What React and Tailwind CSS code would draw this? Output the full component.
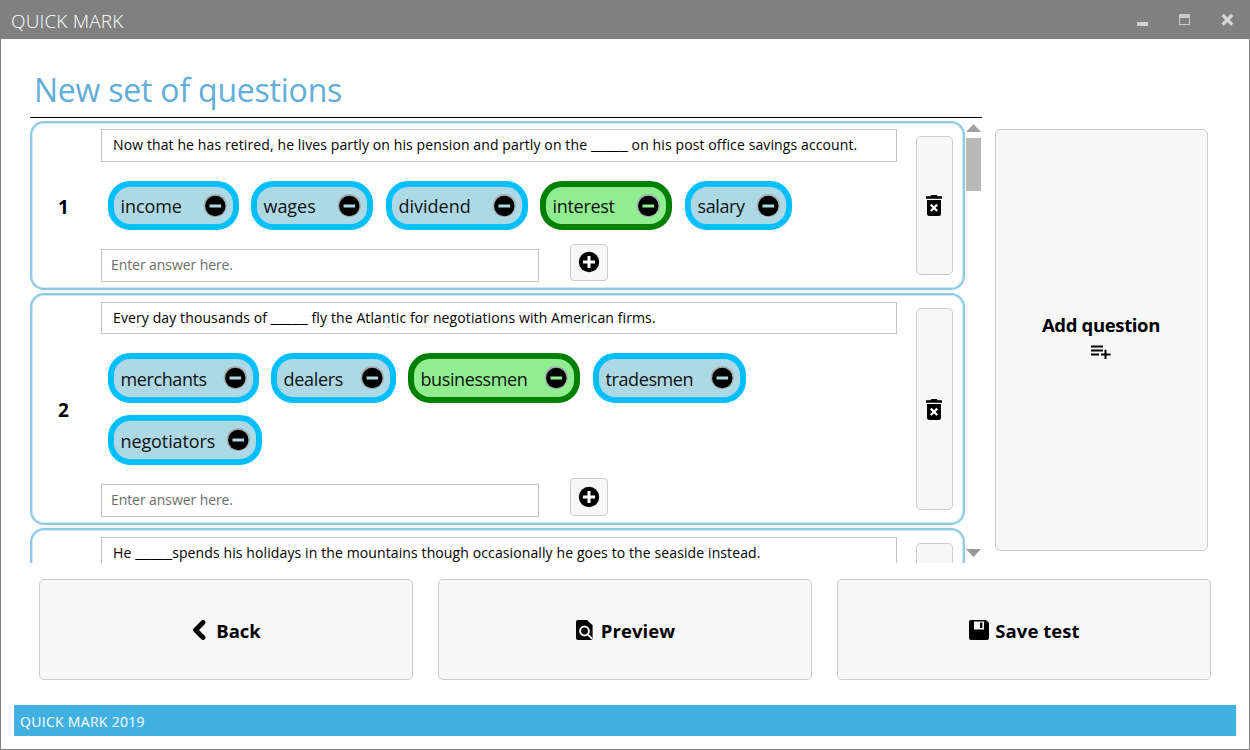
import React from "react";

const questions = [
  {
    number: 1,
    before: "Now that he has retired, he lives partly on his pension and partly on the ",
    after: " on his post office savings account.",
    height: "h-[169px]",
    top: "pt-[6px]",
    box: "h-[33px] pb-[2px]",
    chipArea: "mt-[19px] h-[49px]",
    chipHeight: "h-[49px]",
    entry: "mt-[14px]",
    input: "mt-[5px]",
    addButton: "h-[37px] pb-px",
    trash: "h-[139px]",
    answers: [
      { text: "income", width: "w-[131px]", track: "tracking-[-0.1px]", gap: "mr-[12px]" },
      { text: "wages", width: "w-[122px]", track: "tracking-[-0.05px]", gap: "mr-[13px]" },
      { text: "dividend", width: "w-[142px]", track: "", gap: "mr-[12px]" },
      { text: "interest", width: "w-[132px]", track: "tracking-[-0.3px]", gap: "mr-[13px]", correct: true },
      { text: "salary", width: "w-[107px]", track: "tracking-[-0.4px]", gap: "" },
    ],
  },
  {
    number: 2,
    before: "Every day thousands of ",
    after: " fly the Atlantic for negotiations with American firms.",
    height: "h-[232px]",
    top: "pt-[7px]",
    box: "h-[32px]",
    chipArea: "mt-[19px] h-[112px]",
    chipHeight: "h-[50px]",
    entry: "mt-[13px]",
    input: "mt-[6px]",
    addButton: "h-[38px]",
    trash: "h-[202px]",
    answers: [
      { text: "merchants", width: "w-[151px]", track: "tracking-[-0.4px]", gap: "mr-[12px]" },
      { text: "dealers", width: "w-[125px]", track: "tracking-[-0.3px]", gap: "mr-[12px]" },
      { text: "businessmen", width: "w-[172px]", track: "tracking-[-0.4px]", gap: "mr-[13px]", correct: true },
      { text: "tradesmen", width: "w-[153px]", track: "tracking-[-0.4px]", gap: "" },
      { text: "negotiators", width: "w-[154px]", track: "tracking-[-0.1px]", gap: "" },
    ],
  },
  {
    number: 3,
    collapsed: true,
    before: "He ",
    after: "spends his holidays in the mountains though occasionally he goes to the seaside instead.",
    height: "h-[170px]",
    top: "pt-[7px]",
    box: "h-[33px] pb-[2px]",
    trash: "h-[139px]",
  },
];

function MinusIcon() {
  return (
    <svg className="h-[26px] w-[26px] shrink-0" viewBox="0 0 26 26">
      <circle cx="13.300" cy="12.500" r="11.600" fill="#a3aeb1" />
      <circle cx="13.300" cy="13" r="10.200" fill="#000" />
      <rect x="7.500" y="11.500" width="11.600" height="3" fill="currentColor" />
    </svg>
  );
}

function PlusIcon() {
  return (
    <svg className="h-[22px] w-[22px]" viewBox="0 0 22 22">
      <circle cx="11" cy="11" r="10.200" />
      <path d="M9.500 5h3v4.500H17v3h-4.500v4.500h-3v-4.500H5v-3h4.500z" fill="#fff" />
    </svg>
  );
}

function TrashIcon() {
  return (
    <svg className="h-[21px] w-[16px]" viewBox="0 0 16 21">
      <path d="M5.2 0h5.6l.8 1.2H16v2.6H0V1.2h4.4z" />
      <path d="M1 5h14v13.400a2.500 2.500 0 0 1-2.500 2.500h-9A2.500 2.500 0 0 1 1 18.400z" />
      <path d="M4.800 9.600l6.400 6.400M11.200 9.600l-6.400 6.400" stroke="#fff" strokeWidth="2.200" fill="none" />
    </svg>
  );
}

function Chip({ answer, height }) {
  const tone = answer.correct
    ? "border-[#008000] bg-[#90ee90] text-[#90ee90]"
    : "border-[#00bfff] bg-[#add8e6] text-[#add8e6]";
  return (
    <div className={`flex shrink-0 items-center justify-between rounded-[22px] border-[6px] pr-[5px] pl-[6.500px] ${tone} ${height} ${answer.width} ${answer.gap}`}>
      <span className={`pt-px text-[18px] leading-6 whitespace-nowrap text-[#111] ${answer.track}`}>{answer.text}</span>
      <MinusIcon />
    </div>
  );
}

function Question({ q }) {
  return (
    <section className={`flex shrink-0 rounded-[14px] border-2 border-[#8ccbe3] shadow-[inset_0_0_0_1px_#cdeaf5] ${q.height}`}>
      <div className="flex w-[69px] shrink-0 items-center justify-center pt-[3px] pr-[6px] text-[19px] font-bold">
        {q.collapsed ? null : q.number}
      </div>
      <div className={`w-[796px] shrink-0 ${q.top}`}>
        <div className={`flex items-center border border-[#c3c3c3] pl-[11px] text-[14px] tracking-[0.11px] whitespace-pre ${q.box}`}>
          <p className="leading-5">
            {q.before}
            <span className="text-[16.900px] leading-none tracking-normal">_____</span>
            {q.after}
          </p>
        </div>
        {q.collapsed ? null : (
          <>
            <div className={`flex flex-wrap content-between pl-[7px] ${q.chipArea}`}>
              {q.answers.map((a) => (
                <Chip key={a.text} answer={a} height={q.chipHeight} />
              ))}
            </div>
            <div className={`flex ${q.entry}`}>
              <div className={`flex h-[33px] w-[438px] items-center border border-[#c3c3c3] pb-[2px] pl-[9px] text-[14px] tracking-[-0.080px] text-[#6d6d6d] ${q.input}`}>
                Enter answer here.
              </div>
              <button className={`ml-[31px] flex w-[38px] items-center justify-center rounded-[4px] border border-[#ccc] bg-[#f7f7f7] ${q.addButton}`}>
                <PlusIcon />
              </button>
            </div>
          </>
        )}
      </div>
      <div className="ml-[19px] pt-[13px]">
        <button className={`flex w-[37px] items-center justify-center rounded-[5px] border border-[#ccc] bg-[#f7f7f7] pr-px ${q.trash}`}>
          <TrashIcon />
        </button>
      </div>
    </section>
  );
}

function ActionButton({ icon, label, track, gap }) {
  return (
    <button className={`flex h-[101px] w-[374px] items-center justify-center rounded-[5px] border border-[#ccc] bg-[#f7f7f7] pl-px text-[18.500px] font-bold ${gap} ${track}`}>
      {icon}
      <span className="pt-[3px]">{label}</span>
    </button>
  );
}

const backIcon = (
  <svg className="h-[20px] w-[14px]" viewBox="0 0 14 20">
    <path d="M11 2.500L3.600 10L11 17.500" fill="none" stroke="#000" strokeWidth="4.800" strokeLinecap="round" strokeLinejoin="round" />
  </svg>
);

const previewIcon = (
  <svg className="h-[20px] w-[17px]" viewBox="0 0 17 20">
    <path d="M2 0h9l5.600 5.200V18a2 2 0 0 1-2 2H2a2 2 0 0 1-2-2V2a2 2 0 0 1 2-2z" />
    <circle cx="8.500" cy="11" r="4.400" fill="none" stroke="#f7f7f7" strokeWidth="2" />
    <path d="M11.600 14.200l4.400 4.400" stroke="#f7f7f7" strokeWidth="2" />
  </svg>
);

const saveIcon = (
  <svg className="h-[20px] w-[20px]" viewBox="0 0 20 20">
    <path d="M2 0h15l3 3v15a2 2 0 0 1-2 2H2a2 2 0 0 1-2-2V2a2 2 0 0 1 2-2z" />
    <path d="M5 1.500h10v8H5z" fill="#f7f7f7" />
    <path d="M11 2.600h2.400v5.400H11z" />
  </svg>
);

export default function App() {
  return (
    <div className="flex h-[750px] w-[1250px] flex-col overflow-hidden border border-t-0 border-[#808080] bg-white font-['Open_Sans','Noto_Sans',sans-serif] text-black">
      <header className="flex h-[39px] shrink-0 items-center justify-between bg-[#808080] pr-[14px] pl-[10px]">
        <h1 className="pt-[3px] text-[19px] font-light tracking-[0.150px] text-white">QUICK MARK</h1>
        <svg className="h-[14px] w-[100px]" viewBox="0 0 100 14">
          <path d="M2 9h11v4H2z" fill="#d3d3d3" />
          <path fillRule="evenodd" d="M44 1h11v11H44zM45 5v6h9V5z" fill="#cbcbcb" />
          <path d="M87.600 2l9.600 9.600M97.200 2L87.600 11.600" stroke="#d8d8d8" strokeWidth="3.200" />
        </svg>
      </header>

      <div className="flex h-[524px] shrink-0 pl-[29px]">
        <div className="w-[952px]">
          <h2 className="flex h-[79px] items-center border-b border-black pt-[24px] pl-[4px] text-[32px] leading-none tracking-[-0.220px] text-[#62add9]">
            New set of questions
          </h2>
          <div className="flex h-[445px]">
            <div className="flex w-[935px] flex-col gap-[3px] overflow-hidden pt-[3px]">
              {questions.map((q) => (
                <Question key={q.number} q={q} />
              ))}
            </div>
            <div className="ml-px flex w-[15px] flex-col items-center justify-between pt-[6px] pb-[6px]">
              <div className="flex flex-col items-center gap-[6px]">
                <svg className="h-[8px] w-[15px]" viewBox="0 0 15 8"><path d="M7.500 0L15 8H0z" fill="#a0a0a0" /></svg>
                <div className="h-[53px] w-[15px] bg-[#b9b9b9]" />
              </div>
              <svg className="h-[8px] w-[15px]" viewBox="0 0 15 8"><path d="M0 0h15L7.500 8z" fill="#979797" /></svg>
            </div>
          </div>
        </div>
        <button className="mt-[90px] ml-[13px] flex h-[422px] w-[213px] flex-col items-center justify-center rounded-[5px] border border-[#ccc] bg-[#f7f7f7] pr-[1px] pb-[8px]">
          <span className="text-[18.500px] leading-6 font-bold tracking-[-0.350px]">Add question</span>
          <svg className="mt-[8px] h-[14px] w-[20px]" viewBox="0 0 20 14">
            <path d="M0 1.500h12M0 5.500h12M0 9.500h8M10 9.500h9.600M14.500 4.800v9.200" fill="none" stroke="#000" strokeWidth="2" />
          </svg>
        </button>
      </div>

      <div className="flex gap-[25px] pt-[16px] pl-[38px]">
        <ActionButton icon={backIcon} label="Back" gap="gap-[10px]" track="" />
        <ActionButton icon={previewIcon} label="Preview" gap="gap-[8px]" track="tracking-[0.100px]" />
        <ActionButton icon={saveIcon} label="Save test" gap="gap-[6px]" track="tracking-[0.050px]" />
      </div>

      <footer className="mt-[25px] ml-[13px] flex h-[31px] w-[1222px] shrink-0 items-center bg-[#41b1e1] pt-[2px] pl-[6px] text-[14px] tracking-[0.300px] text-white">
        QUICK MARK 2019
      </footer>
    </div>
  );
}
